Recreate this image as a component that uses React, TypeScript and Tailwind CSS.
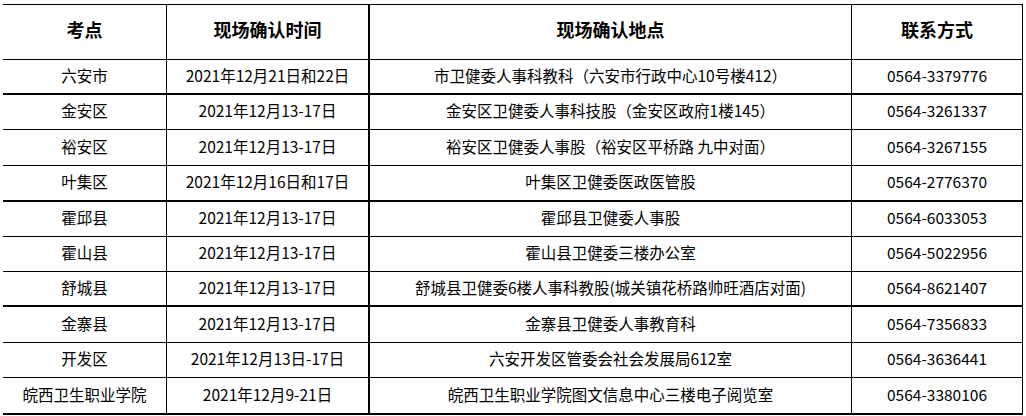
type Row = {
  site: string;
  time: string;
  place: string;
  phone: string;
  h: number;
  thick?: boolean;
};

const rows: Row[] = [
  { site: "六安市", time: "2021年12月21日和22日", place: "市卫健委人事科教科（六安市行政中心10号楼412）", phone: "0564-3379776", h: 35, thick: true },
  { site: "金安区", time: "2021年12月13-17日", place: "金安区卫健委人事科技股（金安区政府1楼145）", phone: "0564-3261337", h: 35 },
  { site: "裕安区", time: "2021年12月13-17日", place: "裕安区卫健委人事股（裕安区平桥路 九中对面）", phone: "0564-3267155", h: 36 },
  { site: "叶集区", time: "2021年12月16日和17日", place: "叶集区卫健委医政医管股", phone: "0564-2776370", h: 36, thick: true },
  { site: "霍邱县", time: "2021年12月13-17日", place: "霍邱县卫健委人事股", phone: "0564-6033053", h: 35 },
  { site: "霍山县", time: "2021年12月13-17日", place: "霍山县卫健委三楼办公室", phone: "0564-5022956", h: 35 },
  { site: "舒城县", time: "2021年12月13-17日", place: "舒城县卫健委6楼人事科教股(城关镇花桥路帅旺酒店对面)", phone: "0564-8621407", h: 35, thick: true },
  { site: "金寨县", time: "2021年12月13-17日", place: "金寨县卫健委人事教育科", phone: "0564-7356833", h: 36 },
  { site: "开发区", time: "2021年12月13日-17日", place: "六安开发区管委会社会发展局612室", phone: "0564-3636441", h: 35 },
  { site: "皖西卫生职业学院", time: "2021年12月9-21日", place: "皖西卫生职业学院图文信息中心三楼电子阅览室", phone: "0564-3380106", h: 37, thick: true },
];

const font = { fontFamily: '"Noto Sans CJK SC", "Noto Sans", sans-serif' };

export default function App() {
  return (
    <div className="h-[416px] w-[1026px] bg-white pl-[3px] pt-[4px] text-black" style={font}>
      <div className="w-[1020px] border-t border-black">
        <div className="grid h-[55px] grid-cols-[164px_203px_482px_171px] border-b border-black text-[18px] font-bold">
          <div className="flex items-center justify-center border-r border-black pb-[5px]">考点</div>
          <div className="flex items-center justify-center border-r-2 border-black pb-[5px]">现场确认时间</div>
          <div className="flex items-center justify-center border-r border-black pb-[5px]">现场确认地点</div>
          <div className="flex items-center justify-center border-r border-black pb-[5px]">联系方式</div>
        </div>
        {rows.map((r) => (
          <div
            key={r.site}
            className={`grid grid-cols-[164px_203px_482px_171px] border-black text-[15.5px] ${r.thick ? "border-b-2" : "border-b"}`}
            style={{ height: r.h }}
          >
            <div className="flex items-center justify-center border-r border-black pb-[2px]">{r.site}</div>
            <div className="flex items-center justify-center border-r-2 border-black pb-[2px]">{r.time}</div>
            <div className="flex items-center justify-center border-r border-black pb-[2px]">{r.place}</div>
            <div className="flex items-center justify-center border-r border-black pb-[2px]">{r.phone}</div>
          </div>
        ))}
      </div>
    </div>
  );
}
